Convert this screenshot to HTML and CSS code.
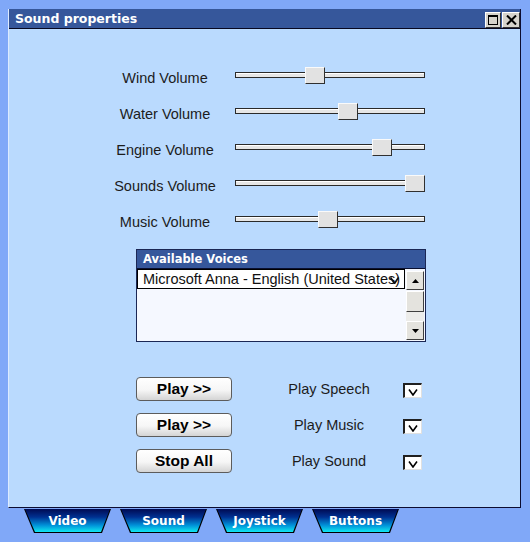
FILE: index.html
```html
<!DOCTYPE html>
<html>
<head>
<meta charset="utf-8">
<link rel="stylesheet" href="styles.css">
</head>
<body>
<div class="window">
  <div class="titlebar">
    <span class="title">Sound properties</span>
    <div class="tbtns">
      <span class="tbtn max"><svg width="10" height="10" viewBox="0 0 10 10"><rect x="0.5" y="0.5" width="9" height="9" fill="none" stroke="#000" stroke-width="1"/><line x1="0" y1="1.5" x2="10" y2="1.5" stroke="#000" stroke-width="1"/></svg></span>
      <span class="tbtn close"><svg width="11" height="10" viewBox="0 0 11 10"><path d="M1 0.5 L10 9.5 M10 0.5 L1 9.5" stroke="#000" stroke-width="2"/></svg></span>
    </div>
  </div>
  <div class="content">
    <div class="sliders">
      <div class="srow"><span class="slabel">Wind Volume</span><div class="slider"><div class="track"></div><div class="thumb" style="left:70px"></div></div></div>
      <div class="srow"><span class="slabel">Water Volume</span><div class="slider"><div class="track"></div><div class="thumb" style="left:103px"></div></div></div>
      <div class="srow"><span class="slabel">Engine Volume</span><div class="slider"><div class="track"></div><div class="thumb" style="left:137px"></div></div></div>
      <div class="srow"><span class="slabel">Sounds Volume</span><div class="slider"><div class="track"></div><div class="thumb" style="left:170px"></div></div></div>
      <div class="srow"><span class="slabel">Music Volume</span><div class="slider"><div class="track"></div><div class="thumb" style="left:83px"></div></div></div>
    </div>
    <div class="voices">
      <div class="vhead">Available Voices</div>
      <div class="vbody">
        <div class="vlist">
          <div class="vitem"><span class="vtext">Microsoft Anna - English (United States)</span><svg class="caret" width="9" height="7" viewBox="0 0 9 7"><path d="M0.5 0.5 L4.5 6.5 L8.5 0.5" fill="none" stroke="#111" stroke-width="1.8"/></svg></div>
        </div>
        <div class="scrollbar">
          <div class="sbtn"><svg width="7" height="4" viewBox="0 0 7 4"><path d="M0 4 L3.5 0 L7 4 Z" fill="#000"/></svg></div>
          <div class="sthumb"></div>
          <div class="sspace"></div>
          <div class="sbtn"><svg width="7" height="4" viewBox="0 0 7 4"><path d="M0 0 L3.5 4 L7 0 Z" fill="#000"/></svg></div>
        </div>
      </div>
    </div>
    <div class="actions">
      <div class="arow"><button class="btn">Play &gt;&gt;</button><span class="clabel">Play Speech</span><span class="check"><svg width="10" height="7" viewBox="0 0 10 7"><path d="M1 0.5 L5 6 L9 0.5" fill="none" stroke="#000" stroke-width="1.6"/></svg></span></div>
      <div class="arow"><button class="btn">Play &gt;&gt;</button><span class="clabel">Play Music</span><span class="check"><svg width="10" height="7" viewBox="0 0 10 7"><path d="M1 0.5 L5 6 L9 0.5" fill="none" stroke="#000" stroke-width="1.6"/></svg></span></div>
      <div class="arow"><button class="btn">Stop All</button><span class="clabel">Play Sound</span><span class="check"><svg width="10" height="7" viewBox="0 0 10 7"><path d="M1 0.5 L5 6 L9 0.5" fill="none" stroke="#000" stroke-width="1.6"/></svg></span></div>
    </div>
  </div>
</div>
<div class="tabs">
  <div class="tab"><span>Video</span></div>
  <div class="tab"><span>Sound</span></div>
  <div class="tab"><span>Joystick</span></div>
  <div class="tab"><span>Buttons</span></div>
</div>
</body>
</html>
```
FILE: styles.css
```css
html, body {
  margin: 0;
  padding: 0;
  background: #80a8f8;
  width: 530px;
  height: 542px;
  overflow: hidden;
}
body {
  font-family: "Liberation Sans", Arial, sans-serif;
}
.window {
  margin: 9px 0 0 8px;
  width: 513px;
  height: 499px;
  box-sizing: border-box;
  background: #badafe;
  border-left: 1px solid #dceaff;
  border-right: 1px solid #0c0c30;
  border-bottom: 1px solid #0c0c30;
  display: flex;
  flex-direction: column;
}
.titlebar {
  height: 19px;
  background: #36579b;
  border-bottom: 1px solid #080820;
  display: flex;
  align-items: flex-start;
  justify-content: space-between;
}
.title {
  font-family: "DejaVu Sans", Verdana, sans-serif;
  font-weight: bold;
  font-size: 12.5px;
  color: #fff;
  line-height: 20px;
  padding-left: 6px;
}
.tbtns {
  display: flex;
  gap: 1px;
  margin-top: 3px;
}
.tbtn {
  height: 16px;
  box-sizing: border-box;
  background: #d6d3cc;
  border-top: 1px solid #fff;
  border-left: 1px solid #fff;
  border-right: 1px solid #303030;
  border-bottom: 1px solid #303030;
  display: flex;
  align-items: center;
  justify-content: center;
}
.tbtn.max { width: 16px; }
.tbtn.close { width: 18px; }
.content {
  flex: 1;
}
.sliders {
  margin-top: 30px;
}
.srow {
  display: flex;
  align-items: center;
  height: 36px;
}
.slabel {
  width: 110px;
  margin-left: 101px;
  text-align: center;
  font-size: 14.5px;
  color: #1c1c1c;
  white-space: nowrap;
  padding-top: 2px;
}
.slider {
  position: relative;
  width: 190px;
  height: 17px;
  margin-left: 15px;
  margin-top: -4px;
  display: flex;
  align-items: center;
}
.track {
  width: 100%;
  height: 6px;
  box-sizing: border-box;
  border: 1px solid #2a2a2a;
  background: #e6e6e6;
  box-shadow: inset 0 1px 0 #fff;
}
.thumb {
  position: absolute;
  top: 0;
  width: 20px;
  height: 17px;
  box-sizing: border-box;
  background: #e2e2e2;
  border-top: 1px solid #fafafa;
  border-left: 1px solid #fafafa;
  border-right: 1px solid #303030;
  border-bottom: 1px solid #303030;
}
.voices {
  margin: 10px 0 0 127px;
  width: 290px;
  height: 93px;
  box-sizing: border-box;
  border: 1px solid #1b2755;
  display: flex;
  flex-direction: column;
}
.vhead {
  height: 18px;
  background: #36579b;
  border-bottom: 1px solid #0a1030;
  color: #fff;
  font-family: "DejaVu Sans", Verdana, sans-serif;
  font-weight: bold;
  font-size: 11.5px;
  line-height: 18px;
  padding-left: 6px;
}
.vbody {
  flex: 1;
  background: #f5f8ff;
  display: flex;
}
.vlist {
  width: 268px;
}
.vitem {
  position: relative;
  height: 20px;
  box-sizing: border-box;
  border: 1px solid #000;
  background: #fff;
  font-size: 14.5px;
  line-height: 18px;
  padding-left: 5px;
  color: #111;
  white-space: nowrap;
  overflow: hidden;
}
.caret {
  position: absolute;
  right: 5px;
  top: 7px;
}
.scrollbar {
  width: 19px;
  display: flex;
  flex-direction: column;
  padding: 2px 0 1px 1px;
  box-sizing: border-box;
  background: #f5f8ff;
}
.sbtn, .sthumb {
  box-sizing: border-box;
  background: #e4e3de;
  border-top: 1px solid #fff;
  border-left: 1px solid #fff;
  border-right: 1px solid #404040;
  border-bottom: 1px solid #404040;
  display: flex;
  align-items: center;
  justify-content: center;
}
.sbtn { height: 19px; }
.sthumb { height: 21px; margin-top: 1px; }
.sspace { flex: 1; background: #ececea; }
.actions {
  margin-top: 29px;
}
.arow {
  display: flex;
  align-items: center;
  height: 36px;
}
.btn {
  margin: 0 0 0 127px;
  width: 96px;
  height: 24px;
  box-sizing: border-box;
  border: 1px solid #5c5c5c;
  border-radius: 4px;
  background: linear-gradient(#ffffff 0%, #f6f6f6 55%, #d4d4d4 100%);
  font-family: "Liberation Sans", Arial, sans-serif;
  font-weight: bold;
  font-size: 15.5px;
  color: #000;
  padding: 0;
  line-height: 22px;
}
.clabel {
  width: 120px;
  margin-left: 37px;
  text-align: center;
  font-size: 14.5px;
  color: #1c1c1c;
  white-space: nowrap;
}
.check {
  margin-left: 14px;
  margin-top: 2px;
  width: 19px;
  height: 15px;
  box-sizing: border-box;
  background: #fff;
  border-top: 2px solid #202020;
  border-left: 2px solid #202020;
  border-right: 1px solid #e0e0e0;
  border-bottom: 1px solid #e0e0e0;
  display: flex;
  align-items: flex-end;
  justify-content: center;
  padding-bottom: 1px;
}
.tabs {
  display: flex;
  gap: 9px;
  margin: 1px 0 0 24px;
}
.tab {
  position: relative;
  width: 87px;
  height: 24px;
  background: #000;
  clip-path: polygon(0 0, 100% 0, calc(100% - 9px) 100%, 10px 100%);
  display: flex;
  align-items: center;
  justify-content: center;
}
.tab::before {
  content: "";
  position: absolute;
  inset: 0 1px 1px 1px;
  clip-path: polygon(0 0, 100% 0, calc(100% - 9px) 100%, 10px 100%);
  background: linear-gradient(#000a52 0%, #003090 35%, #0090d8 70%, #10e8f0 100%);
}
.tab span {
  position: relative;
  font-family: "DejaVu Sans", Verdana, sans-serif;
  font-weight: bold;
  font-size: 12px;
  color: #fff;
  margin-top: -1px;
}
```
